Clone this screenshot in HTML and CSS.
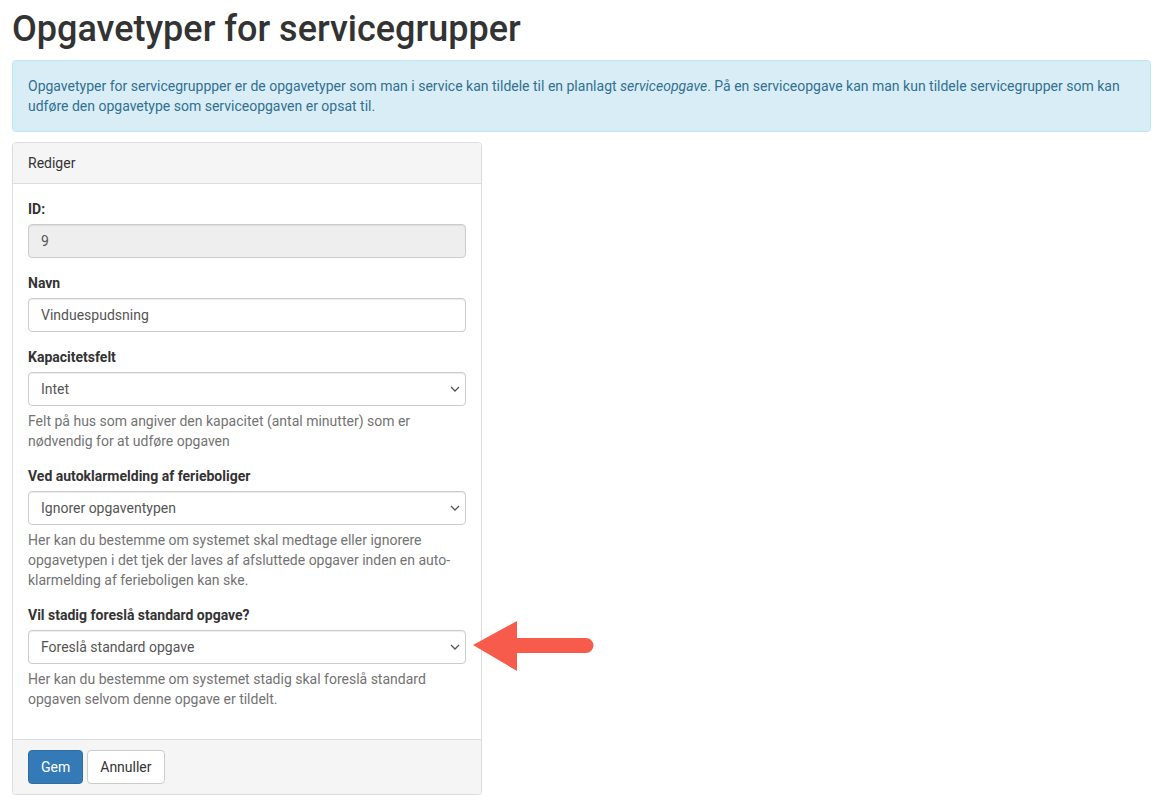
FILE: index.html
```html
<!DOCTYPE html>
<html lang="da">
<head>
<meta charset="utf-8">
<title>Opgavetyper for servicegrupper</title>
<link rel="stylesheet" href="styles.css">
</head>
<body>
<div class="page">
  <h1 class="title">Opgavetyper for servicegrupper</h1>
  <div class="alert">Opgavetyper for servicegruppper er de opgavetyper som man i service kan tildele til en planlagt <em>serviceopgave</em>. På en serviceopgave kan man kun tildele servicegrupper som kan udføre den opgavetype som serviceopgaven er opsat til.</div>

  <div class="panel">
    <div class="panel-heading">Rediger</div>
    <div class="panel-body">
      <div class="form-group">
        <label class="label">ID:</label>
        <input class="control" type="text" value="9" disabled>
      </div>
      <div class="form-group">
        <label class="label">Navn</label>
        <input class="control" type="text" value="Vinduespudsning">
      </div>
      <div class="form-group">
        <label class="label">Kapacitetsfelt</label>
        <div class="select-wrap">
          <select class="control"><option>Intet</option></select>
          <svg class="chev" width="10" height="6" viewBox="0 0 10 6"><path d="M1 1 L5 5 L9 1" fill="none" stroke="#555" stroke-width="1.3"/></svg>
        </div>
        <p class="help">Felt på hus som angiver den kapacitet (antal minutter) som er nødvendig for at udføre opgaven</p>
      </div>
      <div class="form-group">
        <label class="label">Ved autoklarmelding af ferieboliger</label>
        <div class="select-wrap">
          <select class="control"><option>Ignorer opgaventypen</option></select>
          <svg class="chev" width="10" height="6" viewBox="0 0 10 6"><path d="M1 1 L5 5 L9 1" fill="none" stroke="#555" stroke-width="1.3"/></svg>
        </div>
        <p class="help">Her kan du bestemme om systemet skal medtage eller ignorere opgavetypen i det tjek der laves af afsluttede opgaver inden en auto-klarmelding af ferieboligen kan ske.</p>
      </div>
      <div class="form-group">
        <label class="label">Vil stadig foreslå standard opgave?</label>
        <div class="select-wrap">
          <select class="control"><option>Foreslå standard opgave</option></select>
          <svg class="chev" width="10" height="6" viewBox="0 0 10 6"><path d="M1 1 L5 5 L9 1" fill="none" stroke="#555" stroke-width="1.3"/></svg>
        </div>
        <p class="help">Her kan du bestemme om systemet stadig skal foreslå standard opgaven selvom denne opgave er tildelt.</p>
      </div>
    </div>
    <div class="panel-footer">
      <button class="btn btn-primary" type="button">Gem</button>
      <button class="btn btn-default" type="button">Annuller</button>
    </div>
  </div>

  <svg class="arrow" width="124" height="54" viewBox="0 0 124 54">
    <path d="M1 26 L45 2 L45 19 L114 19 A7.5 7.5 0 0 1 114 34 L45 34 L45 52 Z" fill="#f65b4b"/>
  </svg>
</div>
</body>
</html>
```

FILE: styles.css
```css
* { box-sizing: border-box; }
html, body { margin: 0; padding: 0; background: #fff; }
body {
  font-family: Roboto, "Liberation Sans", Arial, sans-serif;
  font-size: 14px;
  line-height: 20px;
  color: #333;
}
.page {
  position: relative;
  padding: 9px 8px 0 12px;
}
.title {
  font-size: 36px;
  font-weight: 500;
  line-height: 40px;
  margin: 0 0 11px;
  color: #333;
}
.alert {
  background: #d9edf7;
  border: 1px solid #bce8f1;
  color: #31708f;
  border-radius: 4px;
  padding: 15px;
  margin-bottom: 10px;
}
.alert em { font-style: italic; }
.panel {
  width: 470px;
  border: 1px solid #ddd;
  border-radius: 4px;
  background: #fff;
  box-shadow: 0 1px 1px rgba(0,0,0,0.05);
}
.panel-heading {
  background: #f5f5f5;
  border-bottom: 1px solid #ddd;
  padding: 10px 15px;
  border-radius: 3px 3px 0 0;
}
.panel-body { padding: 15px; }
.form-group { margin-bottom: 15px; }
.label {
  display: block;
  font-weight: 700;
  margin-bottom: 5px;
}
.control {
  display: block;
  width: 100%;
  height: 34px;
  padding: 6px 12px;
  font-family: inherit;
  font-size: 14px;
  line-height: 20px;
  color: #555;
  background: #fff;
  border: 1px solid #ccc;
  border-radius: 4px;
  box-shadow: inset 0 1px 1px rgba(0,0,0,0.075);
  -webkit-appearance: none;
  appearance: none;
  margin: 0;
}
.control:disabled { background: #eee; opacity: 1; color: #555; }
.select-wrap { position: relative; }
.chev {
  position: absolute;
  right: 6px;
  top: 14px;
  pointer-events: none;
}
.help {
  margin: 5px 0 10px;
  color: #737373;
}
.panel-footer {
  background: #f5f5f5;
  border-top: 1px solid #ddd;
  padding: 10px 15px;
  border-radius: 0 0 3px 3px;
  display: flex;
  gap: 4px;
}
.btn {
  height: 34px;
  padding: 6px 12px;
  font-family: inherit;
  font-size: 14px;
  line-height: 20px;
  border-radius: 4px;
  border: 1px solid transparent;
  cursor: pointer;
}
.btn-primary { background: #337ab7; border-color: #2e6da4; color: #fff; }
.btn-default { background: #fff; border-color: #ccc; color: #333; }
.arrow {
  position: absolute;
  left: 472px;
  top: 619px;
}
```
